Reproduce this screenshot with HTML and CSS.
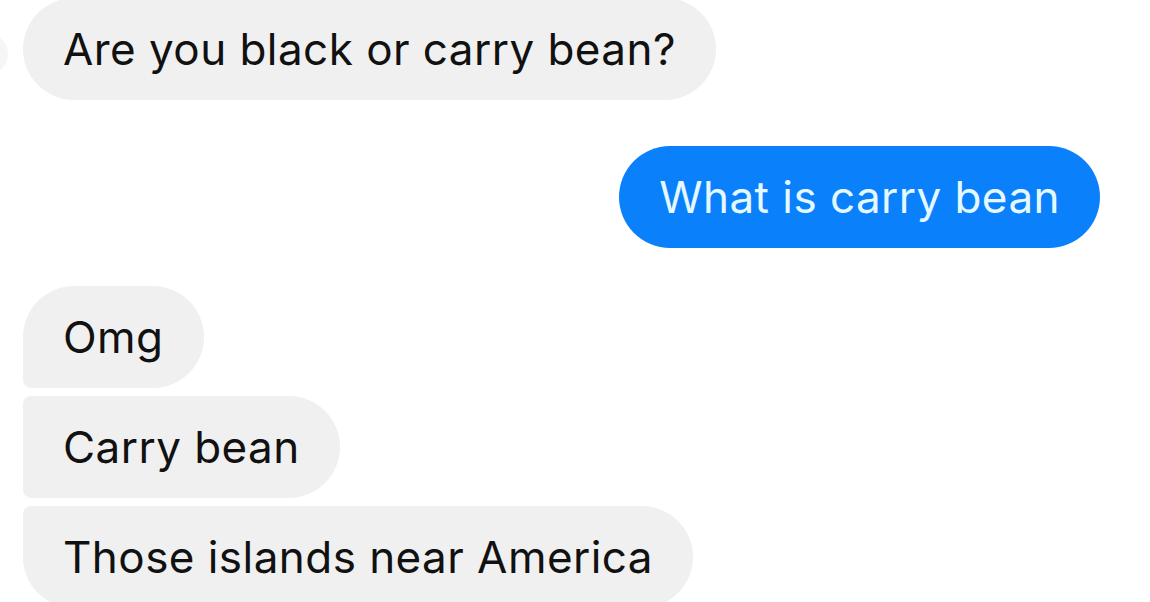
FILE: index.html
```html
<!DOCTYPE html>
<html lang="en">
<head>
    <meta charset="UTF-8">
    <meta name="viewport" content="width=device-width, initial-scale=1.0">
    <title>Messages</title>
    <link rel="stylesheet" href="styles.css">
</head>
<body>
    <div class="thread">
        <div class="row in first">
            <span class="avatar"></span>
            <div class="bubble">Are you black or carry bean?</div>
        </div>

        <div class="row out">
            <div class="bubble">What is carry bean</div>
        </div>

        <div class="group">
            <div class="row in">
                <div class="bubble top">Omg</div>
            </div>
            <div class="row in">
                <div class="bubble middle">Carry bean</div>
            </div>
            <div class="row in">
                <div class="bubble bottom">Those islands near America</div>
            </div>
        </div>
    </div>
</body>
</html>
```

FILE: styles.css
```css
body {
    margin: 0;
    padding: 0;
    background-color: #fff;
    font-family: Inter, "Liberation Sans", Arial, sans-serif;
    overflow: hidden;
}

.thread {
    display: flex;
    flex-direction: column;
    padding: 0 50px 0 23px;
    margin-top: -2px;
}

.row {
    display: flex;
    align-items: center;
}
.row.out {
    justify-content: flex-end;
    margin-top: 46px;
}

/* only the edge of the sender's picture shows */
.avatar {
    width: 40px;
    height: 40px;
    margin-left: -55px;
    margin-right: 15px;
    margin-top: 10px;
    border-radius: 50%;
    background-color: #f6f6f6;
}

.bubble {
    font-size: 44px;
    line-height: 52px;
    letter-spacing: 0.45px;
    padding: 25px 40px;
    border-radius: 51px;
    background-color: #f0f0f0;
    color: #111;
}
.out .bubble {
    background-color: #0b80fb;
    color: #e4f8ff;
}

.group {
    display: flex;
    flex-direction: column;
    gap: 8px;
    margin-top: 38px;
}
.bubble.top {
    border-bottom-left-radius: 8px;
}
.bubble.middle {
    border-top-left-radius: 8px;
    border-bottom-left-radius: 8px;
}
.bubble.bottom {
    border-top-left-radius: 8px;
}
```
